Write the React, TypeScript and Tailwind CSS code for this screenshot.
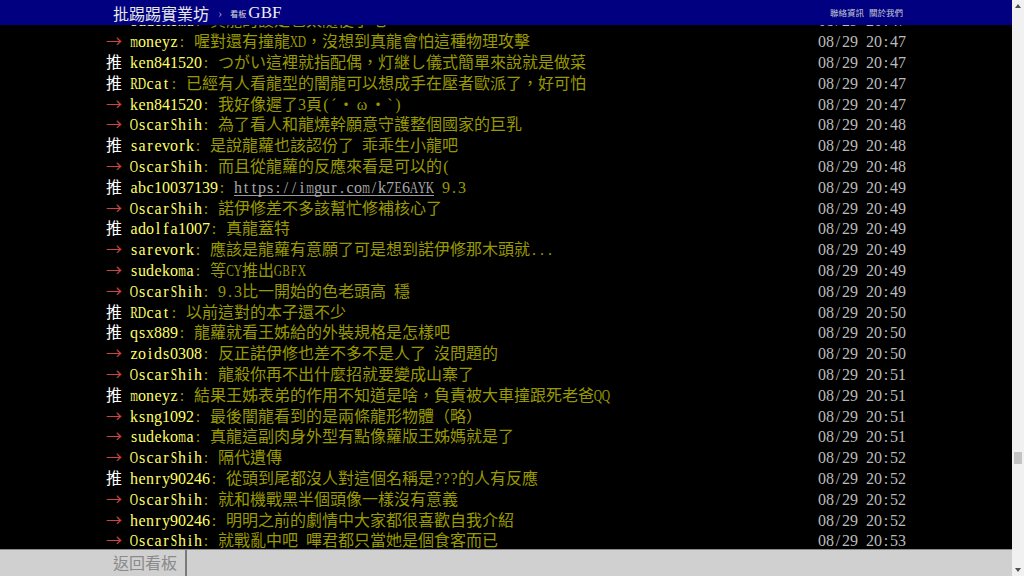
import React from 'react';

type Push = {
  tag: string;
  user: string;
  text: string;
  time: string;
  link?: string;
  after?: string;
};

const pushes: Push[] = [
  { tag: '→', user: 'sudekoma', text: '真龍的設定也太隨便了吧', time: '20:47' },
  { tag: '→', user: 'moneyz', text: '喔對還有撞龍XD，沒想到真龍會怕這種物理攻擊', time: '20:47' },
  { tag: '推', user: 'ken841520', text: 'つがい這裡就指配偶，灯継し儀式簡單來說就是做菜', time: '20:47' },
  { tag: '推', user: 'RDcat', text: '已經有人看龍型的闇龍可以想成手在壓者歐派了，好可怕', time: '20:47' },
  { tag: '→', user: 'ken841520', text: '我好像遲了3頁(´・ω・`)', time: '20:47' },
  { tag: '→', user: 'OscarShih', text: '為了看人和龍燒幹願意守護整個國家的巨乳', time: '20:48' },
  { tag: '推', user: 'sarevork', text: '是說龍蘿也該認份了 乖乖生小龍吧', time: '20:48' },
  { tag: '→', user: 'OscarShih', text: '而且從龍蘿的反應來看是可以的(', time: '20:48' },
  { tag: '推', user: 'abc10037139', text: '', link: 'https://imgur.com/k7E6AYK', after: ' 9.3', time: '20:49' },
  { tag: '→', user: 'OscarShih', text: '諾伊修差不多該幫忙修補核心了', time: '20:49' },
  { tag: '推', user: 'adolfa1007', text: '真龍蓋特', time: '20:49' },
  { tag: '→', user: 'sarevork', text: '應該是龍蘿有意願了可是想到諾伊修那木頭就...', time: '20:49' },
  { tag: '→', user: 'sudekoma', text: '等CY推出GBFX', time: '20:49' },
  { tag: '→', user: 'OscarShih', text: '9.3比一開始的色老頭高 穩', time: '20:49' },
  { tag: '推', user: 'RDcat', text: '以前這對的本子還不少', time: '20:50' },
  { tag: '推', user: 'qsx889', text: '龍蘿就看王姊給的外裝規格是怎樣吧', time: '20:50' },
  { tag: '→', user: 'zoids0308', text: '反正諾伊修也差不多不是人了 沒問題的', time: '20:50' },
  { tag: '→', user: 'OscarShih', text: '龍殺你再不出什麼招就要變成山寨了', time: '20:51' },
  { tag: '推', user: 'moneyz', text: '結果王姊表弟的作用不知道是啥，負責被大車撞跟死老爸QQ', time: '20:51' },
  { tag: '→', user: 'ksng1092', text: '最後闇龍看到的是兩條龍形物體（略）', time: '20:51' },
  { tag: '→', user: 'sudekoma', text: '真龍這副肉身外型有點像蘿版王姊媽就是了', time: '20:51' },
  { tag: '→', user: 'OscarShih', text: '隔代遺傳', time: '20:52' },
  { tag: '推', user: 'henry90246', text: '從頭到尾都沒人對這個名稱是???的人有反應', time: '20:52' },
  { tag: '→', user: 'OscarShih', text: '就和機戰黑半個頭像一樣沒有意義', time: '20:52' },
  { tag: '→', user: 'henry90246', text: '明明之前的劇情中大家都很喜歡自我介紹', time: '20:52' },
  { tag: '→', user: 'OscarShih', text: '就戰亂中吧 嗶君都只當她是個食客而已', time: '20:53' },
];

// full-width cells are two columns wide, like the BBS terminal grid
function isFull(ch: string) {
  const c = ch.codePointAt(0) ?? 0;
  if (c >= 0xff61 && c <= 0xff9f) return false;
  return c >= 0x2e80 || (c >= 0x2190 && c <= 0x21ff) || c === 0x03c9;
}

function Mono({ text, className = '' }: { text: string; className?: string }) {
  return (
    <span className={`flex shrink-0 ${className}`}>
      {Array.from(text).map((ch, i) => {
        let cls = 'w-[8px]';
        if (isFull(ch)) cls = 'w-[16px]';
        else if (ch === 'm' || ch === 'w' || ch === 'M' || ch === 'W') cls = 'w-[8px] scale-x-[0.62]';
        else if (ch >= 'A' && ch <= 'Z') cls = 'w-[8px] scale-x-[0.72]';
        return (
          <span key={i} className={`flex shrink-0 justify-center ${cls}`}>
            {ch === ' ' ? '\u00a0' : ch}
          </span>
        );
      })}
    </span>
  );
}

function PushRow({ p }: { p: Push }) {
  const push = p.tag === '推';
  return (
    <div className="flex h-[20.8px] items-baseline">
      {/* the arrow uses the CJK font; its leading keeps the baseline in line with the serif text */}
      <Mono
        text={p.tag}
        className={push ? 'text-white' : "font-['Noto_Sans_CJK_TC',sans-serif] leading-[17.6px] text-[#cc4444]"}
      />
      <Mono text=" " />
      <Mono text={p.user} className="text-[#ffff66]" />
      <Mono text={': ' + p.text} className="text-[#999900]" />
      {p.link && (
        <Mono
          text={p.link}
          className="bg-[linear-gradient(#9a9a9a,#9a9a9a)] bg-[length:100%_1px] bg-[position:0_17px] bg-no-repeat text-[#a8a8a8]"
        />
      )}
      {p.after && <Mono text={p.after} className="text-[#999900]" />}
      <Mono text={'08/29 ' + p.time} className="ml-auto text-[#bbbbbb]" />
    </div>
  );
}

function Arrow({ up }: { up?: boolean }) {
  return (
    <div className="flex h-[12px] items-center justify-center">
      <svg width="6" height="4" viewBox="0 0 6 4">
        <path d={up ? 'M0 4 L3 0 L6 4 Z' : 'M0 0 L3 4 L6 0 Z'} fill="#505050" />
      </svg>
    </div>
  );
}

export default function App() {
  return (
    <div className="flex h-[576px] w-[1024px] overflow-hidden bg-black font-['Liberation_Serif','Noto_Sans_CJK_TC',serif]">
      <div className="flex min-w-0 flex-1 flex-col">
        {/* top bar */}
        <header className="h-[25px] shrink-0 bg-[#000080]">
          <div className="mx-auto flex h-full w-[800px] items-center justify-between pl-[7px] pr-[3px]">
            <div className="flex items-center">
              <span className="font-['Noto_Sans_CJK_TC',sans-serif] text-[16px] leading-none text-[#e8e8e8]">批踢踢實業坊</span>
              <span className="ml-[9px] text-[13px] leading-none text-[#9a9ab8]">›</span>
              <span className="ml-[8px] mt-[2px] font-['Noto_Sans_CJK_TC',sans-serif] text-[8px] leading-none text-[#dddddd]">看板</span>
              <span className="ml-[2px] text-[17px] leading-none text-[#eeeeee]">GBF</span>
            </div>
            <div className="flex gap-[5px] font-['Noto_Sans_CJK_TC',sans-serif] text-[8.5px] leading-none text-[#c8c8d8]">
              <span>聯絡資訊</span>
              <span>關於我們</span>
            </div>
          </div>
        </header>

        {/* push list, scrolled */}
        <main className="min-h-0 flex-1 overflow-hidden bg-black">
          <div className="mx-auto -mt-[13.6px] w-[800px] text-[16px] leading-[20.8px]">
            {pushes.map((p, i) => (
              <PushRow key={i} p={p} />
            ))}
          </div>
        </main>

        {/* bottom bar */}
        <footer className="h-[27px] shrink-0 border-t border-[#8a8a8a] bg-[#d0d0d0]">
          <div className="mx-auto flex h-full w-[800px]">
            <div className="flex items-center border-r-2 border-[#7a7a7a] pb-[3px] pl-[7px] pr-[8px] font-['Noto_Sans_CJK_TC',sans-serif] text-[16px] leading-none text-[#8a8a8a]">
              返回看板
            </div>
          </div>
        </footer>
      </div>

      {/* scrollbar */}
      <div className="flex w-[12px] shrink-0 flex-col bg-[#f1f1f1]">
        <Arrow up />
        <div className="flex-1 px-[2px]">
          <div className="mt-[440px] h-[12px] bg-[#c4c4c4]" />
        </div>
        <Arrow />
      </div>
    </div>
  );
}
